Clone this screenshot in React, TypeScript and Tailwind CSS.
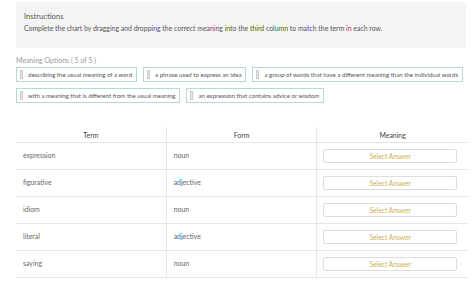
const options = [
  ["describing the usual meaning of a word", "a phrase used to express an idea", "a group of words that have a different meaning than the individual words"],
  ["with a meaning that is different from the usual meaning", "an expression that contains advice or wisdom"],
];

const rows = [
  ["expression", "noun"],
  ["figurative", "adjective"],
  ["idiom", "noun"],
  ["literal", "adjective"],
  ["saying", "noun"],
];

function Chip({ label }: { label: string }) {
  return (
    <div className="flex h-[15px] items-center gap-[5px] border border-[#b8d8d8] bg-white pl-[3px] pr-[4px]">
      <span className="h-[9px] w-[3px] border border-[#c9c9c9] bg-[#e8e8e8]" />
      <span className="whitespace-nowrap text-[6.1px] text-[#555]">{label}</span>
    </div>
  );
}

export default function App() {
  return (
    <div className="h-[289px] w-[474px] overflow-hidden bg-white pl-4 pr-2 pt-[2px] font-['Lato',sans-serif]">
      <div className="h-[46px] bg-[#f4f4f4] px-2 pt-[9px]">
        <p className="text-[7.6px] leading-[10px] text-[#555]">Instructions</p>
        <p className="mt-[3px] text-[6.9px] leading-[9px] text-[#555]">
          Complete the chart by dragging and dropping the correct meaning into the third column to match the term in each row.
        </p>
      </div>

      <p className="mt-[8px] text-[7px] leading-[9px] text-[#999]">Meaning Options ( 5 of 5 )</p>

      <div className="mt-[2px] flex flex-col gap-[6px]">
        {options.map((row, i) => (
          <div key={i} className="flex gap-[6px]">
            {row.map((o) => (
              <Chip key={o} label={o} />
            ))}
          </div>
        ))}
      </div>

      <div className="mt-[24px] w-[452px] text-[6.9px] leading-[10px]">
        <div className="grid h-[16px] grid-cols-3 border-b border-[#e6e6e6] text-[#444]">
          <div className="flex items-center justify-center border-r border-[#e6e6e6]">Term</div>
          <div className="flex items-center justify-center border-r border-[#e6e6e6]">Form</div>
          <div className="flex items-center justify-center">Meaning</div>
        </div>
        {rows.map(([term, form]) => (
          <div key={term} className="grid h-[27px] grid-cols-3 border-b border-[#e6e6e6] text-[#666]">
            <div className="border-r border-[#e6e6e6] pl-[7px] pt-[7px]">{term}</div>
            <div className="border-r border-[#e6e6e6] pl-[7px] pt-[7px]">{form}</div>
            <div className="pl-[6px] pt-[6px]">
              <button className="flex h-[14px] w-[134px] items-center justify-center rounded-[2px] border border-[#dcdcdc] bg-white text-[6.6px] text-[#cfae4e]">
                Select Answer
              </button>
            </div>
          </div>
        ))}
      </div>
    </div>
  );
}
